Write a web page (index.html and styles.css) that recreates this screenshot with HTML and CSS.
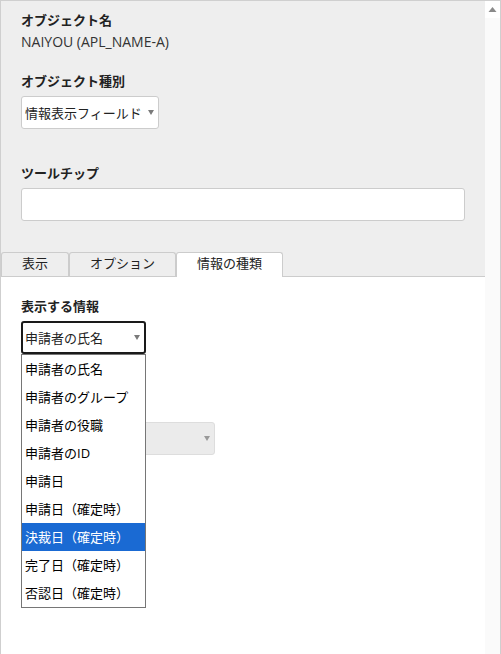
FILE: index.html
```html
<!DOCTYPE html>
<html lang="ja">
<head>
    <meta charset="UTF-8">
    <meta name="viewport" content="width=device-width, initial-scale=1.0">
    <title>オブジェクト設定</title>
    <link rel="stylesheet" href="styles.css">
</head>
<body>
    <div class="frame">
        <div class="pane">
            <!-- Object header -->
            <div class="head">
                <div class="label">オブジェクト名</div>
                <div class="value">NAIYOU (APL_NAME-A)</div>

                <div class="label spaced">オブジェクト種別</div>
                <div class="select type-select">
                    <span>情報表示フィールド</span>
                    <i class="caret"></i>
                </div>

                <div class="label spaced-lg">ツールチップ</div>
                <div class="textbox"></div>

                <div class="tabs">
                    <div class="tab tab-first">表示</div>
                    <div class="tab">オプション</div>
                    <div class="tab active">情報の種類</div>
                </div>
            </div>

            <!-- Tab content -->
            <div class="body">
                <div class="label">表示する情報</div>
                <div class="dropdown">
                    <div class="select focused">
                        <span>申請者の氏名</span>
                        <i class="caret"></i>
                    </div>
                    <ul class="options">
                        <li>申請者の氏名</li>
                        <li>申請者のグループ</li>
                        <li>申請者の役職</li>
                        <li>申請者のID</li>
                        <li>申請日</li>
                        <li>申請日（確定時）</li>
                        <li class="selected">決裁日（確定時）</li>
                        <li>完了日（確定時）</li>
                        <li>否認日（確定時）</li>
                    </ul>
                </div>

                <div class="select disabled">
                    <span></span>
                    <i class="caret"></i>
                </div>
            </div>
        </div>

        <div class="scrollbar">
            <div class="scroll-up">
                <svg width="9" height="7" viewBox="0 0 9 7"><polygon points="4.5,1 8.5,6 0.5,6" fill="#8a8a8a"/></svg>
            </div>
        </div>
    </div>
</body>
</html>
```

FILE: styles.css
```css
body {
    margin: 0;
    padding: 0;
    font-family: "Open Sans", "Noto Sans CJK JP", sans-serif;
    font-size: 13px;
    color: #222;
    background-color: #fff;
}

.frame {
    display: flex;
    height: 654px;
    border-top: 1px solid #cfcfcf;
    border-left: 1px solid #cfcfcf;
    border-right: 1px solid #cfcfcf;
    box-sizing: border-box;
    overflow: hidden;
}

.pane {
    flex: 1;
    min-width: 0;
}

.head {
    background-color: #eeeeee;
    padding: 10px 0 0 0;
}

.head > .label,
.head > .value,
.head > .select,
.head > .textbox {
    margin-left: 20px;
    margin-right: 20px;
}

.label {
    font-weight: bold;
    line-height: 18px;
    color: #222;
}

.value {
    font-size: 14px;
    line-height: 18px;
    margin-top: 4px;
    color: #333;
}

.spaced {
    margin-top: 21px;
}

.spaced-lg {
    margin-top: 35px;
}

.select {
    display: flex;
    align-items: center;
    justify-content: space-between;
    height: 33px;
    box-sizing: border-box;
    margin-top: 6px;
    padding: 0 4px 0 3px;
    background-color: #fff;
    border: 1px solid #cccccc;
    border-radius: 3px;
    color: #222;
    white-space: nowrap;
}

.type-select {
    width: 138px;
}

.caret {
    width: 0;
    height: 0;
    border-left: 3.5px solid transparent;
    border-right: 3.5px solid transparent;
    border-top: 5px solid #7a7a7a;
    margin-left: 4px;
}

.textbox {
    height: 33px;
    box-sizing: border-box;
    margin-top: 6px;
    background-color: #fff;
    border: 1px solid #cccccc;
    border-radius: 3px;
}

.tabs {
    display: flex;
    margin-top: 31px;
    border-bottom: 1px solid #cccccc;
}

.tab {
    width: 107px;
    height: 24px;
    box-sizing: border-box;
    line-height: 20px;
    text-align: center;
    background-color: #eeeeee;
    border: 1px solid #cccccc;
    border-bottom: none;
    border-radius: 3px 3px 0 0;
    color: #222;
}

.tab-first {
    width: 68px;
}

.tab.active {
    height: 25px;
    margin-bottom: -1px;
    background-color: #fff;
}

.body {
    padding: 20px 20px 0 20px;
}

.dropdown {
    position: relative;
    width: 125px;
}

.select.focused {
    width: 125px;
    padding: 0 4px 0 2px;
    border: 2px solid #1a1a1a;
}

.options {
    position: absolute;
    top: 100%;
    left: 0;
    width: 125px;
    box-sizing: border-box;
    margin: 0;
    padding: 0;
    list-style: none;
    background-color: #fff;
    border: 1px solid #767676;
    z-index: 2;
}

.options li {
    height: 28px;
    line-height: 28px;
    padding-left: 3px;
    color: #000;
    white-space: nowrap;
}

.options li.selected {
    background-color: #1a6ad3;
    color: #fff;
}

.select.disabled {
    width: 194px;
    margin-top: 68px;
    background-color: #ebebeb;
    border-color: #dddddd;
}

.select.disabled .caret {
    border-top-color: #999;
}

.scrollbar {
    width: 15px;
    background-color: #fafafa;
}

.scroll-up {
    height: 17px;
    background-color: #fff;
    display: flex;
    justify-content: center;
    padding-top: 5px;
    box-sizing: border-box;
}
```
